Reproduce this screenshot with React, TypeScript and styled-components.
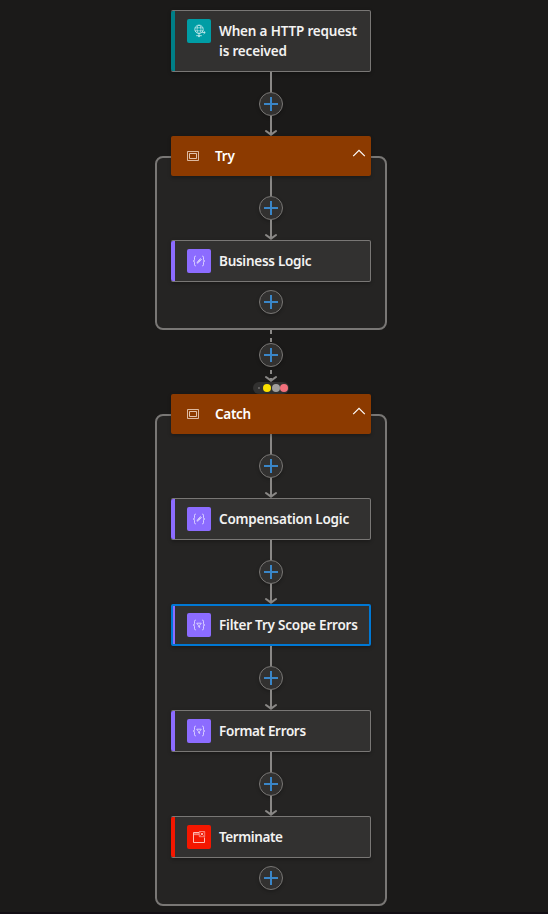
import React from "react";
import styled, { createGlobalStyle, css } from "styled-components";

const GlobalStyle = createGlobalStyle`
  body { margin: 0; background: #1b1a19; }
  * { box-sizing: border-box; }
`;

const LINE = "#8a8886";

const Canvas = styled.main`
  width: 548px;
  height: 914px;
  padding-top: 10px;
  padding-right: 6px;
  display: flex;
  flex-direction: column;
  align-items: center;
  background: #1b1a19;
  border-bottom: 2px solid #120e14;
  color: #f3f2f1;
  font-family: "Segoe UI", "Noto Sans", "Open Sans", sans-serif;
  font-size: 13.5px;
  font-weight: 600;
  line-height: 20px;
  overflow: hidden;
`;

const CardBox = styled.article<{ $accent: string; $selected?: boolean }>`
  width: 200px;
  flex: none;
  display: flex;
  align-items: flex-start;
  gap: 8px;
  padding: 8px 4px 8px 11px;
  border: 1px solid #797775;
  border-left: 0;
  border-radius: 2px;
  background: #323130;
  box-shadow: 0 1.6px 3.6px rgba(0, 0, 0, 0.25);
  &::before {
    content: "";
    flex: none;
    width: 4px;
    align-self: stretch;
    margin: -8px 0 -8px -11px;
    background: ${(p) => p.$accent};
    border-radius: 2px 0 0 2px;
  }
  ${(p) =>
    p.$selected &&
    css`
      border: 2px solid #0078d4;
      padding: 7px 3px 7px 9px;
      &::before {
        width: 2px;
        margin: -7px 0 -7px -9px;
        border-radius: 0;
      }
    `}
`;

const IconTile = styled.span<{ $color: string }>`
  width: 24px;
  height: 24px;
  flex: none;
  margin-left: 4px;
  border-radius: 2px;
  background: ${(p) => p.$color};
  svg { display: block; }
`;

const CardTitle = styled.span<{ $spacing: number }>`
  display: flex;
  flex-direction: column;
  padding: 2px 0;
  white-space: nowrap;
  letter-spacing: ${(p) => p.$spacing}px;
`;

const ScopeBox = styled.section`
  width: 232px;
  display: flex;
  flex-direction: column;
  align-items: center;
`;

const ScopeHeader = styled.header`
  position: relative;
  z-index: 1;
  width: 200px;
  height: 40px;
  display: flex;
  align-items: center;
  padding: 0 5px 0 16px;
  border-radius: 2px;
  background: #8c3a00;
  color: #fff;
  box-shadow: 0 1.6px 3.6px rgba(0, 0, 0, 0.25);
`;

const ScopeTitle = styled.span<{ $spacing: number }>`
  flex: 1;
  margin-left: 16px;
  letter-spacing: ${(p) => p.$spacing}px;
`;

const Chevron = styled.svg`
  margin-bottom: 6px;
`;

const ScopeBody = styled.div`
  width: 232px;
  margin-top: -20px;
  padding: 18px 0 14px;
  display: flex;
  flex-direction: column;
  align-items: center;
  border: 2px solid #797775;
  border-radius: 8px;
  background: #252423;
`;

const Connector = styled.div`
  display: flex;
  flex-direction: column;
  align-items: center;
  flex: none;
`;

const LineSvg = styled.svg`
  display: block;
  flex: none;
`;

const AddButton = styled.button`
  width: 24px;
  height: 24px;
  flex: none;
  padding: 0;
  display: grid;
  place-items: center;
  border: 1px solid #797775;
  border-radius: 50%;
  background: #323130;
  box-shadow: 0 1.6px 3.6px rgba(0, 0, 0, 0.25);
`;

const AddSlot = styled.div`
  margin-top: 8px;
`;

const RunAfter = styled.div`
  width: 36px;
  height: 12px;
  flex: none;
  display: flex;
  align-items: center;
  padding-left: 2px;
  border-radius: 6px;
  background: #323130;
`;

const StatusDot = styled.i<{ $color: string; $left: number }>`
  width: 8px;
  height: 8px;
  margin-left: ${(p) => p.$left}px;
  border-radius: 50%;
  background: ${(p) => p.$color};
`;

const EmptyStatus = styled.i`
  width: 2px;
  height: 2px;
  margin: 0 3px;
  background: #605e5c;
`;

function Add() {
  return (
    <AddButton aria-label="Add step">
      <svg width="14" height="14" viewBox="0 0 14 14">
        <path d="M7 0v14M0 7h14" stroke="#3a86c8" strokeWidth="2" />
      </svg>
    </AddButton>
  );
}

function Edge({ dashed = false }: { dashed?: boolean }) {
  const top = dashed ? 13 : 20;
  const bottom = dashed ? 15 : 20;
  return (
    <Connector>
      <LineSvg width="2" height={top}>
        <path d={`M1 0V${top}`} stroke={LINE} strokeWidth="2" strokeDasharray={dashed ? "4 4" : undefined} />
      </LineSvg>
      <Add />
      <LineSvg width="14" height={bottom}>
        {dashed ? (
          <path d="M7 3V7M7 11V14" stroke={LINE} strokeWidth="2" />
        ) : (
          <path d={`M7 0V${bottom - 1}`} stroke={LINE} strokeWidth="2" />
        )}
        <path
          d={`M2 ${bottom - 5}L7 ${bottom - 1.4}L12 ${bottom - 5}`}
          fill="none"
          stroke={LINE}
          strokeWidth="2.1"
          strokeLinecap="round"
        />
      </LineSvg>
    </Connector>
  );
}

type Kind = "http" | "compose" | "filter" | "terminate";

const tileColors: Record<Kind, string> = {
  http: "#009da5",
  compose: "#8c6cff",
  filter: "#8c6cff",
  terminate: "#f41700",
};

function Glyph({ kind }: { kind: Kind }) {
  if (kind === "http") {
    return (
      <svg width="24" height="24" fill="none" stroke="#d5f0f1" strokeWidth=".8">
        <circle cx="12" cy="10.3" r="4.2" />
        <ellipse cx="12" cy="10.3" rx="1.9" ry="4.2" strokeWidth=".6" />
        <path d="M8 8.8h8M8 11.8h8" strokeWidth=".6" />
        <path d="M15.2 13.5h3M16.6 12l1.6 1.5l-1.6 1.5" />
        <path d="M12 14.5V17" />
        <path d="M9.2 16.7h5.6M11 17.6h2" />
      </svg>
    );
  }
  if (kind === "terminate") {
    return (
      <svg width="24" height="24" fill="none" stroke="#ffcfc8" strokeWidth="1">
        <path d="M12 7.5H6.5v10h11V12.5" strokeOpacity=".9" />
        <path d="M7 8h5v1.8H7z" fill="#ffcfc8" fillOpacity=".4" stroke="none" />
        <path d="M7 9.7h5" strokeOpacity=".6" strokeWidth=".8" />
        <path d="M12.3 6.5h5.4v5.2h-5.4z" strokeWidth=".8" strokeOpacity=".75" />
        <path d="M13.6 7.7l2.8 2.8m0-2.8l-2.8 2.8" strokeWidth=".9" />
      </svg>
    );
  }
  return (
    <svg width="24" height="24" fill="none" stroke="#e0d8ff" strokeWidth=".9">
      <path d="M9 7.2H8.5Q7.5 7.2 7.5 8.2V10.8Q7.5 12 6.2 12Q7.5 12 7.5 13.2V15.8Q7.5 16.8 8.5 16.8H9M15 7.2h.5q1 0 1 1v2.6q0 1.2 1.3 1.2q-1.3 0-1.3 1.2v2.6q0 1-1 1H15" />
      {kind === "compose" ? (
        <path d="M10 14.2l.4-1.5l3.1-3.1l1 1l-3.1 3.1zM10.7 13.4l3-3" />
      ) : (
        <path d="M9.7 10.2h4.6L12.6 12.4v2.1l-1.2-.8v-1.3z" />
      )}
    </svg>
  );
}

interface CardProps {
  kind: Kind;
  title: string;
  continuation?: string;
  spacing: number;
  selected?: boolean;
}

function Card({ kind, title, continuation, spacing, selected }: CardProps) {
  return (
    <CardBox $accent={kind === "http" ? "#007f87" : tileColors[kind]} $selected={selected}>
      <IconTile $color={tileColors[kind]}>
        <Glyph kind={kind} />
      </IconTile>
      <CardTitle $spacing={spacing}>
        <span>{title}</span>
        {continuation && <span>{continuation}</span>}
      </CardTitle>
    </CardBox>
  );
}

interface ScopeProps {
  title: string;
  spacing: number;
  children: React.ReactNode;
}

function Scope({ title, spacing, children }: ScopeProps) {
  return (
    <ScopeBox>
      <ScopeHeader>
        <svg width="12" height="10" fill="none" stroke="#f1d9c8">
          <path d="M.5 .5h11v9H.5z" strokeOpacity=".8" />
          <path d="M2.5 2.5h7v5h-7z" strokeOpacity=".85" />
        </svg>
        <ScopeTitle $spacing={spacing}>{title}</ScopeTitle>
        <Chevron width="14" height="8" fill="none" stroke="#fff" strokeWidth="1.2">
          <path d="M1.2 7.2L7 1.4L12.8 7.2" />
        </Chevron>
      </ScopeHeader>
      <ScopeBody>
        {children}
        <AddSlot>
          <Add />
        </AddSlot>
      </ScopeBody>
    </ScopeBox>
  );
}

export default function App() {
  return (
    <>
      <GlobalStyle />
      <Canvas>
        <Card kind="http" title="When a HTTP request" continuation="is received" spacing={-0.18} />
        <Edge />
        <Scope title="Try" spacing={-0.2}>
          <Edge />
          <Card kind="compose" title="Business Logic" spacing={-0.27} />
        </Scope>
        <Edge dashed />
        <RunAfter>
          <EmptyStatus />
          <StatusDot $color="#fce100" $left={0} />
          <StatusDot $color="#a19f9d" $left={1} />
          <StatusDot $color="#f1707b" $left={0} />
        </RunAfter>
        <Scope title="Catch" spacing={-0.3}>
          <Edge />
          <Card kind="compose" title="Compensation Logic" spacing={-0.22} />
          <Edge />
          <Card kind="filter" title="Filter Try Scope Errors" spacing={-0.22} selected />
          <Edge />
          <Card kind="filter" title="Format Errors" spacing={-0.34} />
          <Edge />
          <Card kind="terminate" title="Terminate" spacing={-0.4} />
        </Scope>
      </Canvas>
    </>
  );
}
